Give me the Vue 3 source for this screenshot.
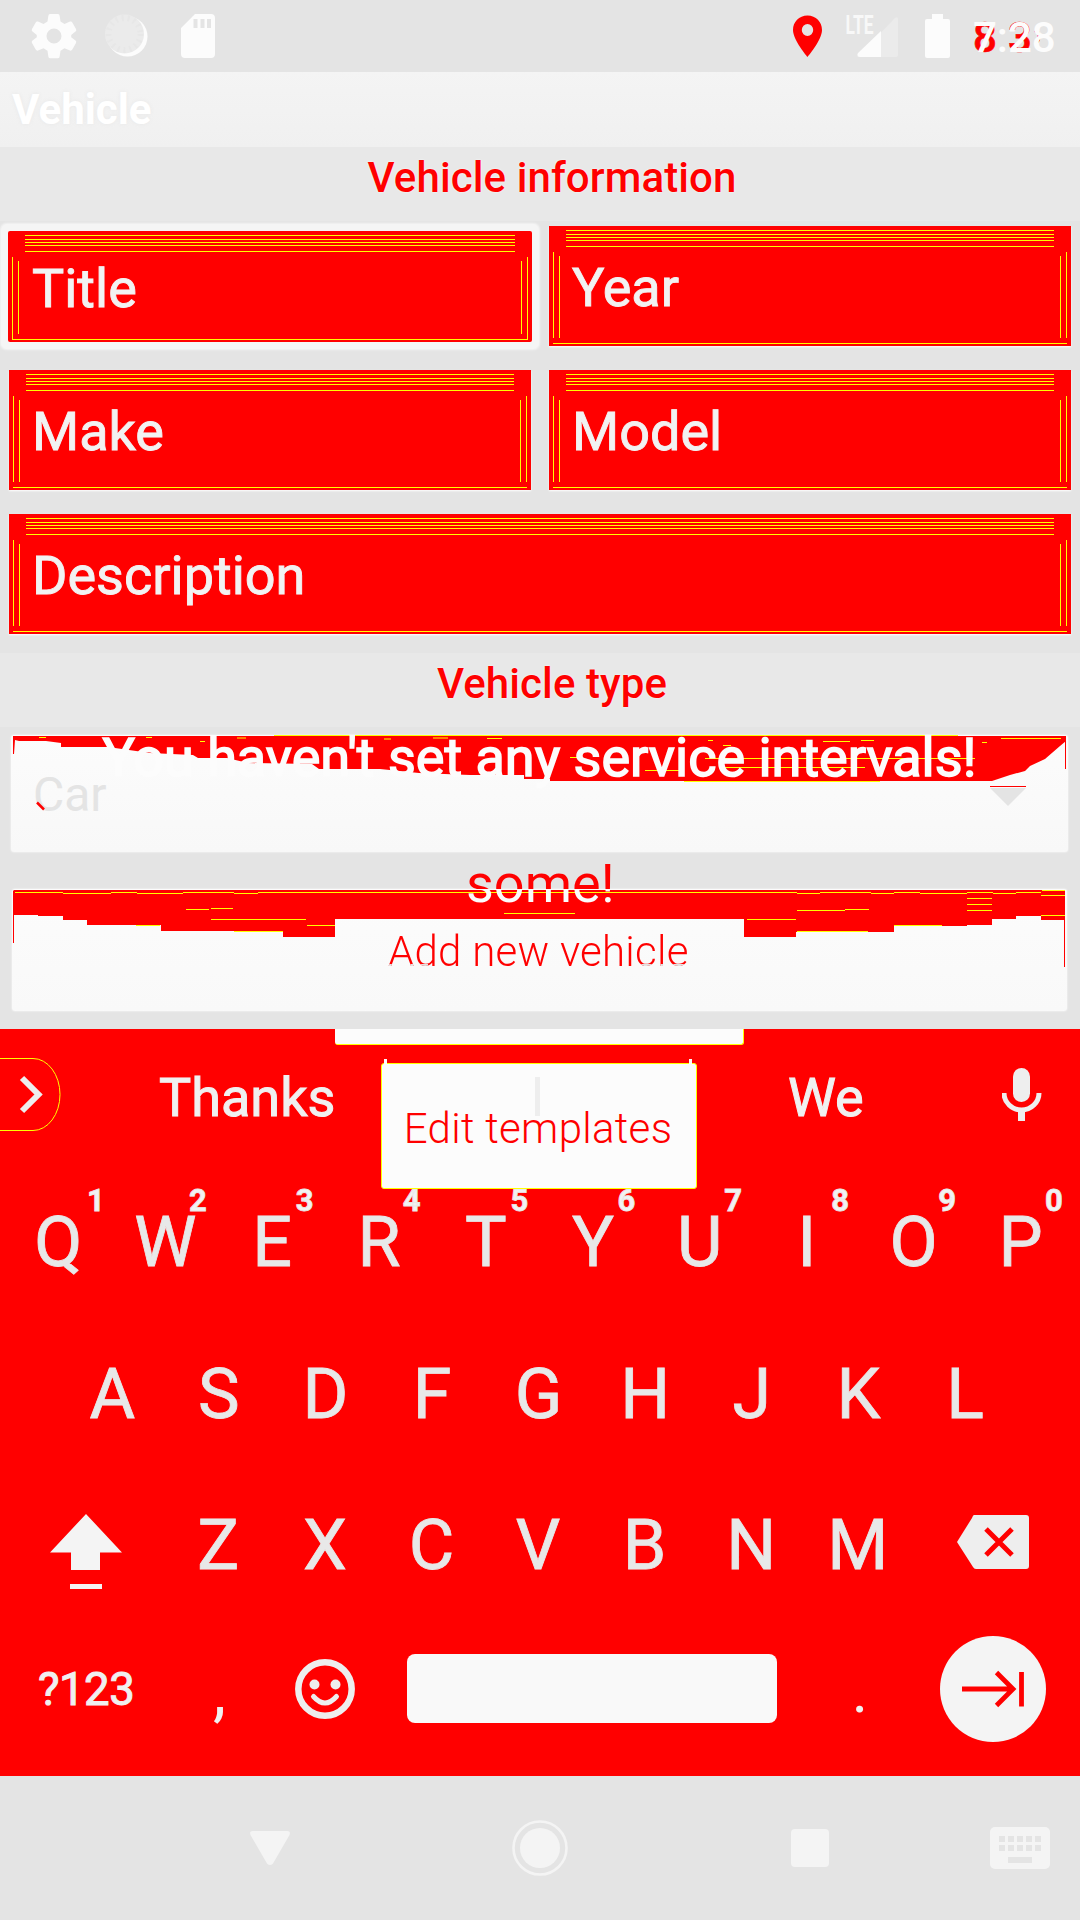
<script setup>
const numbers = ['1', '2', '3', '4', '5', '6', '7', '8', '9', '0']
const row1 = 'QWERTYUIOP'.split('').map((k, i) => ({ k, n: numbers[i] }))
const row2 = 'ASDFGHJKL'.split('')
const row3 = 'ZXCVBNM'.split('')
const fields = ['Title', 'Year', 'Make', 'Model', 'Description']
</script>

<template>
  <main class="screen">
    <header class="status">
      <svg class="status-left" width="240" height="72" viewBox="0 0 240 72">
        <g fill="#fcfcfc">
          <path fill-rule="evenodd" d="M50 14h8q1.500 0 1.700 2l.8 5.500 4 2.400 5.500-2.300q1.500-.5 2.300 1l3.700 6.500q.8 1.500-.5 2.500l-4.300 3.300v2.400l4.300 3.300q1.300 1 .5 2.500l-3.700 6.500q-.8 1.500-2.300 1l-5.500-2.300-4 2.400-.8 5.500q-.2 2-1.700 2h-8q-1.500 0-1.700-2l-.8-5.500-4-2.400-5.500 2.300q-1.500.5-2.300-1l-3.700-6.500q-.8-1.500.5-2.500l4.300-3.300v-2.400l-4.300-3.300q-1.300-1-.5-2.500l3.700-6.500q.8-1.500 2.300-1l5.500 2.300 4-2.400.8-5.500q.2-2 1.700-2zM54 28.500a7.500 7.500 0 1 0 0 15 7.500 7.500 0 0 0 0-15z" />
          <circle cx="127.500" cy="36.500" r="20" />
          <path fill-rule="evenodd" d="M195 14h16q4 0 4 4v36q0 4-4 4h-26q-4 0-4-4V28zM193.500 19v9h4v-9zM200.500 19v9h4v-9zM207 19v9h4v-9z" />
        </g>
        <circle cx="124.500" cy="34" r="19.500" fill="#ebebeb" />
        <circle cx="124.500" cy="34" r="16" fill="none" stroke="#e7e7e7" stroke-width="6" stroke-dasharray="2 4" />
      </svg>
      <div class="status-right">
        <svg width="180" height="72" viewBox="780 0 180 72">
          <path fill="red" fill-rule="evenodd" d="M807.500 15.500c-8.500 0-14.500 6.500-14.500 14.500 0 10 14.500 27 14.500 27S822 40 822 30c0-8-6-14.500-14.500-14.500zm0 8.500a5.700 6 0 1 1 0 12 5.700 6 0 0 1 0-12z" />
          <path fill="#ebebeb" d="M857 57 895 18q3-2 3 1v36q0 2-2 2z" />
          <path fill="#fcfcfc" d="M881 31v26h-21q-4-1-2-4zM932 14h11v5h5q2 0 2 2v35q0 2-2 2h-21q-2 0-2-2V21q0-2 2-2h5z" />
          <text x="845.500" y="34" class="lte" textLength="28" lengthAdjust="spacingAndGlyphs">LTE</text>
        </svg>
        <div class="clock">
          <span class="clock-old">8</span><span class="clock-old minutes">3</span>
          <svg class="sliver" width="8" height="16" viewBox="0 0 8 16"><path d="M1 1.500q4.500 1.500 4 6.500t-4 6" fill="none" stroke="red" stroke-width="3" /></svg>
          <span class="clock-new">7:28</span>
        </div>
      </div>
    </header>
    <div class="titlebar">Vehicle</div>
    <h2 class="section">Vehicle information</h2>
    <div class="fields">
      <div v-for="(f, i) in fields" :key="f" class="field" :class="{ focus: i === 0, wide: i === 4 }"><span>{{ f }}</span></div>
    </div>
    <h2 class="section second">Vehicle type</h2>

    <div class="panel spinner">
      <svg class="tear" width="1058" height="118" viewBox="11 735 1058 118">
        <path fill="red" d="M13 736H1066V741L1060 746 1045 759 1030 766 1025 771 1010 775 992 781H550V779H524V775H470L419 773 380 769H319L312 764 248 763 227 758H198L193 755 150 753 108 747H61V743L46 741H19L15 740 14 754H13z" />
        <path stroke="#ff0" stroke-width="1" d="M274 735.500H958M39 737.500h7M146 737.500h6M237 738h9M433 738h15M487 738.500h15M384 739h7M200 741.500h5M708 740.500h5M823 741.500h27M861 740.500h13M982 742.500h5M723 745.500h8M570 757.500h10M705 758.500h270M720 767.500h145M645 770.500h35M684 781.500H880M1001 738.500h60" />
        <path fill="#e4e4e4" d="M990 788h36l-18 18z" />
        <path stroke="red" d="M990 786.500h36M1065.500 740v29" />
      </svg>
      <div class="notice">You haven't set any service intervals!</div>
      <span class="car">Car</span>
      <svg class="tear" width="1058" height="118" viewBox="11 735 1058 118">
        <path stroke="red" stroke-width="2.500" d="M37 802.500l7 7" />
      </svg>
    </div>

    <div class="panel action">
      <svg class="tear" width="1055" height="122" viewBox="12 889 1055 122">
        <path fill="red" d="M14 890H1065V967H1064V920H1041V916H1016V919H992V925H967V926H894V932H796V937H744V919H335V937H283V931H161V925H87V920H63V916H38V915H14V943H13V891z" />
        <path stroke="#ff0" d="M15 892.500h48m0 1h48m0-1h26m0 1h46m0-1h51m0 1h24m0-1H797m0 1h23m0-1h51m0 1h23m0-1h26m0 1h47m0-1h26m0 1h23m0-1h25M186 909.500h23M211 908.500h22M211 919.500h95M136 925.500h24M307 925.500h28M234 931.500h49M504 913.500h71M747 919.500h49M797 910.500h48m0-1h24M797 931.500h71M894 925.500h48M967 898.500h25M967 904.500h25M967 910.500h25M1041 895.500h24M1041 915.500h24M1042 890.500h23" />
      </svg>
      <div class="some">some!</div>
      <div class="add">Add new vehicle</div>
    </div>

    <section class="keyboard">
      <div class="popup-edge"></div>
      <div class="suggestions">
        <svg class="more" width="62" height="74" viewBox="0 0 62 74">
          <path d="M0 .5h33a27 36 0 0 1 0 72H0" fill="none" stroke="#ff0" />
          <path d="M22 20 38.500 36.500 22 53" fill="none" stroke="#eee" stroke-width="6" />
        </svg>
        <span class="thanks">Thanks</span>
        <span class="we">We</span>
        <svg class="mic" width="40" height="54" viewBox="0 0 40 54">
          <rect x="11" y="0" width="17" height="34" rx="8.500" fill="#eee" />
          <path d="M2 25a17.500 17 0 0 0 35 0" fill="none" stroke="#eee" stroke-width="5" />
          <path d="M16 42h7v11h-7z" fill="#eee" />
        </svg>
      </div>
      <div class="keys r1">
        <div v-for="x in row1" :key="x.k" class="key">{{ x.k }}<sup>{{ x.n }}</sup></div>
      </div>
      <div class="keys r2"><div v-for="k in row2" :key="k" class="key">{{ k }}</div></div>
      <div class="keys r3">
        <svg class="shift" width="72" height="76" viewBox="50 1514 72 76">
          <path fill="#f4f4f4" d="M86 1514 122 1552.500H100V1570H71V1552.500H50zM70 1584h32v5H70z" />
        </svg>
        <div v-for="k in row3" :key="k" class="key">{{ k }}</div>
        <svg class="back" width="72" height="54" viewBox="957 1515 72 54">
          <path fill="#eee" d="M974 1515h52q3 0 3 3v48q0 3-3 3h-50q-2 0-3-2l-16-25 15-24q1-3 2-3z" />
          <path stroke="red" stroke-width="5" d="m986 1529 26 26m0-26-26 26" />
        </svg>
      </div>
      <div class="bottom">
        <span class="sym">?123</span>
        <span class="comma">,</span>
        <svg class="smile" width="60" height="60" viewBox="0 0 60 60">
          <circle cx="30" cy="30" r="26.700" fill="none" stroke="#eee" stroke-width="6.500" />
          <circle cx="19.500" cy="25.500" r="5" fill="#eee" /><circle cx="40.500" cy="25.500" r="5" fill="#eee" />
          <path d="M18.500 37.500q11.500 13 23 0" fill="none" stroke="#eee" stroke-width="5" stroke-linecap="round" />
        </svg>
        <div class="space"></div>
        <span class="dot">.</span>
        <svg class="enter" width="106" height="106" viewBox="940 1636 106 106">
          <circle cx="993" cy="1689" r="53" fill="#f4f4f4" />
          <path d="M962 1689h50M996.500 1672.500l16.500 16.500-16.500 16.500M1021.500 1672v34.500" fill="none" stroke="red" stroke-width="4.800" />
        </svg>
      </div>
      <div class="templates"><i class="tick left"></i><i class="tick right"></i><i class="ghost"></i><span>Edit templates</span></div>
    </section>

    <nav class="nav">
      <svg width="1080" height="144" viewBox="0 1776 1080 144" fill="#f4f4f4">
        <path d="M253 1831h34q4 0 2.500 4l-16.500 28.500q-3 3-6 0L250.500 1835q-1.500-4 2.500-4z" />
        <circle cx="540" cy="1848" r="26.500" fill="none" stroke="#f4f4f4" stroke-width="2.600" />
        <circle cx="540" cy="1848" r="20" />
        <rect x="791" y="1829" width="38" height="38" rx="4" />
        <rect x="990" y="1827" width="60" height="42" rx="5" />
        <g fill="#e4e4e4">
          <template v-for="c in 5" :key="c">
            <rect :x="990 + c * 9" y="1836" width="6" height="6" />
            <rect :x="990 + c * 9" y="1845" width="6" height="6" />
          </template>
          <rect x="1008" y="1857" width="24" height="6" />
        </g>
      </svg>
    </nav>
  </main>
</template>

<style>
body { margin: 0; background: #e4e4e4; }
</style>
<style scoped>
.screen { width: 1080px; height: 1920px; overflow: hidden; background: #e4e4e4; font-family: Roboto, "Liberation Sans", sans-serif; display: flex; flex-direction: column; }
svg { display: block; flex: none; }
.status { height: 72px; flex: none; display: flex; justify-content: space-between; }
.status-right { display: flex; width: 300px; }
.lte { font: 700 26px Roboto, sans-serif; fill: #f8f8f8; }
.clock { position: relative; margin-left: 13px; width: 90px; font-size: 42px; line-height: 75px; font-weight: 500; }
.clock span { position: absolute; left: 0; top: 0; }
.clock .clock-old { left: 0; color: red; -webkit-text-stroke: 0.6px red; }
.clock .minutes { left: 35px; }
.sliver { position: absolute; left: 61px; top: 29px; }
.clock-new { color: #fcfcfc; }
.titlebar { height: 75px; flex: none; box-sizing: border-box; padding-left: 12px; background: linear-gradient(#f4f4f4, #f0f0f0); color: #fff; font-size: 42px; font-weight: 700; line-height: 75px; text-shadow: 0 0 4px #e8e8e8; }
.section { margin: 0; height: 74px; flex: none; box-sizing: border-box; padding-left: 24px; background: #e8e8e8; color: red; text-align: center; font-size: 42px; font-weight: 500; letter-spacing: 0.1px; line-height: 62px; text-shadow: 0 0 2px #fff; }
.fields { height: 432px; flex: none; box-sizing: border-box; padding: 5px 9px 0; display: grid; grid-template-columns: 522px 522px; grid-auto-rows: 120px; gap: 24px 18px; }
.field { position: relative; box-sizing: border-box; padding: 2px 0 0 23px; background: red; color: #f2f2f2; font-size: 54px; line-height: 120px; box-shadow: 0 1px 2px #fff; -webkit-text-stroke: 0.900px #f2f2f2; }
.field::before { content: ""; position: absolute; inset: 4px 4px 2px; border-bottom: 1px solid #ff0; background: linear-gradient(#ff0 0 1px, transparent 1px 4px, #ff0 4px 5px, transparent 5px 7px, #ff0 7px 8px, transparent 8px 10px, #ff0 10px 11px, transparent 11px 16px, #ff0 16px 17px, transparent 17px) 13px 0 / calc(100% - 26px) 100% no-repeat, linear-gradient(90deg, #ff0 1px, transparent 1px calc(100% - 1px), #ff0 calc(100% - 1px)) 0 22px / 100% 86px no-repeat; }
.field::after { content: ""; position: absolute; inset: 30px 10px 8px; border: solid #ff0; border-width: 0 1px; }
.field span { position: relative; }
.wide { grid-column: 1 / 3; }
.focus { height: 111px; width: 524px; margin: 5px 0 0 -1px; padding: 0 0 0 24px; line-height: 115px; box-shadow: 0 0 0 7px #f5f5f5, 0 0 2px 8px #f3f3f3; border-radius: 2px; }
.panel { position: relative; flex: none; background: #fafafa; border-radius: 3px; box-shadow: 0 0 2px #fff; }
.spinner { width: 1057px; height: 117px; margin: 8px 0 0 11px; background: linear-gradient(#fcfcfc, #f8f8f8); }
.tear { position: absolute; left: 0; top: 0; }
.notice { position: absolute; left: 0; right: 0; top: -9px; text-align: center; color: #fcfcfc; font-size: 54px; line-height: 63px; white-space: nowrap; -webkit-text-stroke: 1.500px #fcfcfc; }
.car { position: absolute; left: 22px; top: 32px; font-size: 48px; font-weight: 400; line-height: 56px; color: #e4e4e4; }
.action { width: 1055px; height: 122px; margin: 37px 0 0 12px; background: linear-gradient(#fcfcfc, #f9f9f9); }
.some { position: absolute; left: 454px; top: -37px; font-size: 54px; line-height: 63px; color: transparent; background: linear-gradient(red 37px, #fcfcfc 37px); background-clip: text; -webkit-background-clip: text; }
.add { position: absolute; left: 376px; top: 38px; font-size: 42px; font-weight: 300; letter-spacing: 0.25px; line-height: 50px; white-space: nowrap; color: transparent; background: linear-gradient(#e2e2e2, #e2e2e2) 0 37px / 40px 14px no-repeat, linear-gradient(#e2e2e2, #e2e2e2) 100% 37px / 50px 14px no-repeat, red; background-clip: text; -webkit-background-clip: text; }
.keyboard { position: relative; flex: none; height: 747px; margin-top: 18px; background: red; display: flex; flex-direction: column; }
.popup-edge { box-sizing: border-box; width: 409px; height: 16px; margin: 0 0 -1px 335px; flex: none; background: #fcfcfc; border: solid #ff0; border-width: 0 1px 1px 0; border-radius: 0 0 3px 3px; }
.suggestions { height: 119px; flex: none; display: flex; align-items: flex-start; font-size: 54px; line-height: 63px; color: #f0f0f0; padding-top: 14px; box-sizing: border-box; -webkit-text-stroke: 1px #f0f0f0; }
.thanks { margin: 8px 0 0 97px; width: 178px; }
.we { margin: 8px 0 0 451px; width: 76px; }
.mic { margin: 10px 0 0 138px; }
.keys { display: flex; flex: none; font-size: 70px; line-height: 82px; color: #e8e8e8; -webkit-text-stroke: 0.8px #e8e8e8; }
.key { position: relative; flex: none; width: 106.600px; text-align: center; }
.key sup { position: absolute; left: 80px; top: -18px; font-size: 31px; font-weight: 700; line-height: 36px; color: #f2f2f2; }
.r1 .key { width: 106.900px; }
.key:first-child sup { left: 82px; }
.key:nth-child(2) sup { left: 77px; }
.key:nth-child(3) sup { left: 77px; }
.key:nth-child(4) sup { left: 77px; }
.key:nth-child(n + 5) sup { left: 78px; }
.r1 { padding: 38px 5px 0; height: 114px; }
.r2 { padding: 37.500px 0 0 59px; height: 114px; }
.r3 { padding: 37px 0 0 50px; height: 114px; }
.shift { margin: 10px 43px 0 0; }
.back { margin: 11px 0 0 46px; }
.bottom { display: flex; flex: none; align-items: center; height: 120px; margin-top: 11px; color: #f0f0f0; }
.sym { margin-left: 38px; width: 98px; font-size: 45.500px; line-height: 54px; margin-top: 2px; white-space: nowrap; letter-spacing: -0.5px; -webkit-text-stroke: 1px #f0f0f0; }
.comma { margin: 5px 62px 0 77px; width: 20px; font-size: 66px; }
.space { width: 370px; height: 69px; margin-left: 52px; border-radius: 8px; background: #f9f9f9; }
.dot { margin: 4px 0 0 73px; width: 20px; text-align: center; font-size: 62px; }
.enter { margin-left: 70px; }
.templates { position: absolute; left: 381px; top: 34px; width: 314px; height: 124px; border: 1px solid #ff0; border-radius: 3px; background: #fcfcfc; color: red; font-size: 42px; font-weight: 300; letter-spacing: 0.3px; line-height: 129px; text-align: center; }
.templates span { position: relative; left: -1px; }
.ghost { position: absolute; left: 153px; top: 13px; width: 5px; height: 39px; background: #eee; }
.tick { position: absolute; top: -5px; width: 3px; height: 8px; background: #fcfcfc; }
.left { left: 2px; }
.right { right: 4px; }
.nav { flex: none; height: 144px; }
</style>
